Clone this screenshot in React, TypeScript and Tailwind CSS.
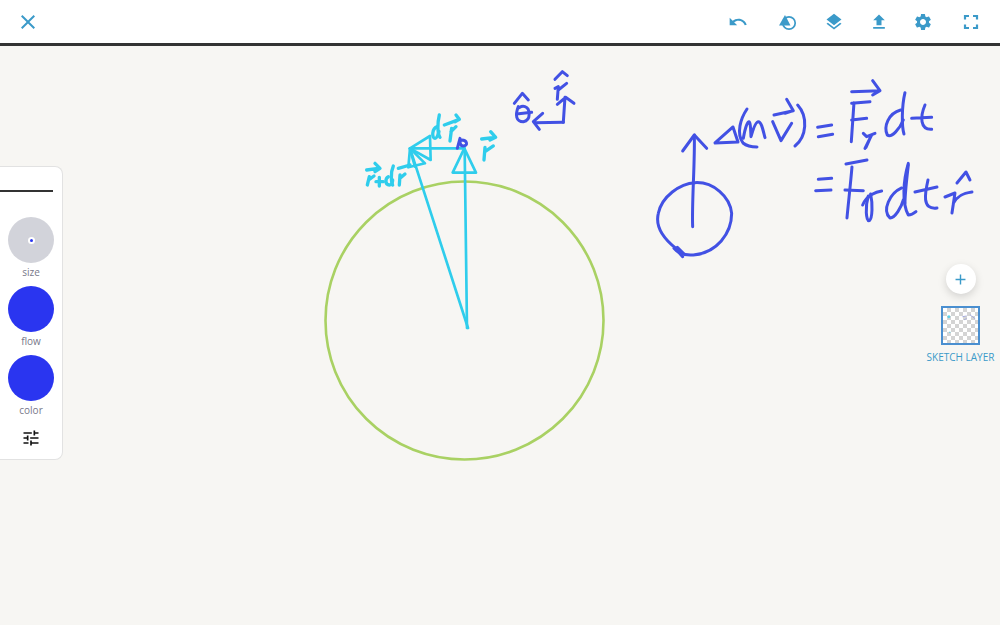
import { MdAdd, MdClose, MdFileUpload, MdLayers, MdSettings, MdTune, MdUndo } from "react-icons/md";

const BLUE_INK = "#4251e4";
const CYAN_INK = "#2fcdec";

// strokes are written in the coordinates of a 3x crop, hence the scale on the groups
const rightInk = [
  "M78 535C40 505 15 470 25 430C35 380 90 340 135 338C190 335 240 380 245 430C245 490 200 550 130 555C105 557 85 550 72 535",
  "M75 535L98 560M82 532L100 550",
  "M128 470C125 400 135 280 133 195",
  "M98 243L133 195L170 235",
  "M249 171L195 219L264 216L249 171",
  "M291 117C272 145 258 190 279 219C290 228 305 231 321 231",
  "M280 205C285 175 292 155 297 155C302 155 302 185 303 200C310 175 318 155 325 155C335 155 340 185 345 203",
  "M368 155L393 212L425 160",
  "M372 135L430 122M410 88L430 122L405 130",
  "M443 105C475 140 470 200 435 228",
  "M503 172L545 165M505 200L548 193",
  "M605 65L690 62M668 32L690 62L668 75",
  "M612 98L604 215M605 100L660 95M605 150L650 145",
  "M640 190L650 200L675 190M665 195C655 215 650 225 645 235M660 205L648 232",
  "M765 68C755 110 755 170 762 192",
  "M752 120C715 130 700 170 712 195C725 205 750 175 760 150",
  "M785 145L845 142M825 105C810 140 810 180 845 178",
  "M505 328L545 325M497 362L543 360",
  "M588 282L651 270M606 291C602 340 595 400 591 444",
  "M585 360L640 362",
  "M638 405C650 375 680 365 695 363",
  "M655 378C645 410 648 455 658 452C668 445 668 400 662 372",
  "M775 280C760 330 755 400 775 435C785 435 792 430 798 425",
  "M775 285C770 330 765 370 765 400",
  "M755 354C720 370 695 420 720 444C735 445 755 410 760 390",
  "M795 366L861 351M834 330C825 370 815 420 861 414",
  "M885 381L915 369L906 429M910 400C920 380 935 370 966 366",
  "M921 339L948 306L960 330",
];

const axesInk = [
  "M615 58L637 35L652 47",
  "M615 85L625 80L622 118M625 90L650 70",
  "M640 187L645 112M622 133L647 112L672 130",
  "M640 187L555 188M578 160L550 185L568 208",
  "M493 130L517 100L535 120",
  "M505 140C495 165 498 185 520 185C545 180 540 145 525 140C510 135 505 150 505 140",
  "M500 162L545 157",
  "M322 265L330 235",
  "M335 240C352 240 355 258 340 258C328 258 328 240 335 240",
];

const vectorLines = [
  "M180 265L354 804",
  "M344 265L351 804",
  "M343 265L308 338L378 338Z",
  "M180 265L343 265",
  "M180 265L240 228L242 300Z",
  "M180 265L225 310L175 322Z",
  "M180 268L195 320",
];

const vectorLetters = [
  "M402 300L405 262M405 275L430 258",
  "M395 237L435 232M422 215L437 232L420 240",
  "M268 165C262 190 262 220 270 232",
  "M262 200C245 205 245 235 255 235C262 235 265 220 267 215",
  "M300 243L305 205M303 215L318 200",
  "M283 195L328 178M318 165L328 178L315 185",
  "M50 330L85 325M75 310L90 325L75 335",
  "M52 375L58 350M58 358L72 348",
  "M78 365L100 365M88 352L88 378",
  "M130 318C120 340 125 370 128 375",
  "M115 350C105 355 105 375 118 375C125 375 128 365 128 360",
  "M148 375L150 345M150 355L165 342",
  "M145 325L180 315",
];

function HistoryShapeIcon() {
  return (
    <svg viewBox="0 0 22 22" className="h-[22px] w-[22px]" fill="none">
      <circle cx="13" cy="12" r="6.2" stroke="currentColor" strokeWidth="1.7" fill="#fff" />
      <path d="M9 4L14.5 14.5H3z" fill="currentColor" />
    </svg>
  );
}

function FullscreenIcon() {
  return (
    <svg viewBox="0 0 20 20" className="h-5 w-5" fill="none" stroke="currentColor" strokeWidth="2.2">
      <path d="M4 7.5V4H8M12 4H16V7.5M16 12.5V16H12M8 16H4V12.5" />
    </svg>
  );
}

function Dial({ label, children }: { label: string; children: React.ReactNode }) {
  return (
    <div className="flex flex-col items-center">
      {children}
      <span className="mt-[2px] text-[10px] leading-[14px] text-[#77788a]">{label}</span>
    </div>
  );
}

export default function App() {
  return (
    <div className="flex h-[625px] w-[1000px] flex-col overflow-hidden bg-[#f7f6f3] font-['Open_Sans',sans-serif]">
      <header className="flex h-[46px] shrink-0 items-center justify-between border-b-[3px] border-[#333333] bg-white pl-4 pr-[19px] text-[#3b9ac9]">
        <MdClose size={24} />
        <div className="flex items-center">
          <MdUndo size={20} />
          <span className="ml-[28px]">
            <HistoryShapeIcon />
          </span>
          <MdLayers size={20} className="ml-[26px]" />
          <MdFileUpload size={20} className="ml-[25px]" />
          <MdSettings size={20} className="ml-[24px]" />
          <span className="ml-[28px]">
            <FullscreenIcon />
          </span>
        </div>
      </header>

      <main className="relative flex-1">
        <svg viewBox="0 46 1000 579" className="absolute inset-0 h-full w-full" fill="none" strokeLinecap="round" strokeLinejoin="round">
          <circle cx="464.5" cy="320.5" r="139" stroke="#a9d163" strokeWidth="2.6" />
          <g transform="translate(350 60) scale(0.3333)" stroke={CYAN_INK}>
            <g strokeWidth="8">
              {vectorLines.map((d) => (
                <path key={d} d={d} />
              ))}
            </g>
            <g strokeWidth="10">
              {vectorLetters.map((d) => (
                <path key={d} d={d} />
              ))}
            </g>
          </g>
          <g transform="translate(350 60) scale(0.3333)" stroke={BLUE_INK} strokeWidth="9">
            {axesInk.map((d) => (
              <path key={d} d={d} />
            ))}
          </g>
          <g transform="translate(650 70) scale(0.3333)" stroke={BLUE_INK} strokeWidth="9">
            {rightInk.map((d) => (
              <path key={d} d={d} />
            ))}
          </g>
        </svg>

        <aside className="absolute left-0 top-[120px] flex h-[294px] w-[63px] flex-col rounded-r-lg border border-l-0 border-[#e2e2e2] bg-white">
          <div className="mt-[23px] h-0.5 w-[53px] bg-[#333333]" />
          <div className="mt-[25px] flex flex-col items-center gap-[7px]">
            <Dial label="size">
              <div className="flex h-[46px] w-[46px] items-center justify-center rounded-full bg-[#d2d3da]">
                <div className="flex h-[7px] w-[7px] items-center justify-center rounded-full bg-white">
                  <div className="h-[3px] w-[3px] rounded-full bg-[#2a35f0]" />
                </div>
              </div>
            </Dial>
            <Dial label="flow">
              <div className="h-[46px] w-[46px] rounded-full bg-[#2a35f0]" />
            </Dial>
            <Dial label="color">
              <div className="h-[46px] w-[46px] rounded-full bg-[#2a35f0]" />
            </Dial>
          </div>
          <MdTune size={20} className="ml-[21px] mt-[11px] text-[#111111]" />
        </aside>

        <div className="absolute right-[6px] top-[218px] flex w-[67px] flex-col items-center text-[#3b9ac9]">
          <button className="flex h-[30px] w-[30px] items-center justify-center rounded-full bg-white shadow-[0_3px_8px_rgba(0,0,0,0.15)]">
            <MdAdd size={17} />
          </button>
          <div className="mt-3 h-[39px] w-[39px] border-2 border-[#4a8fd0] bg-[conic-gradient(#d4d4d4_25%,#ffffff_0_50%,#d4d4d4_0_75%,#ffffff_0)] bg-[length:8px_8px]">
            <svg viewBox="0 0 36 36" fill="none" strokeLinecap="round" className="h-full w-full">
              <circle cx="6" cy="9" r="1.5" fill={CYAN_INK} opacity="0.7" />
              <circle cx="7" cy="25" r="0.8" fill={CYAN_INK} opacity="0.6" />
              <path d="M20 9L24 8M22 12L24 11M28 7L33 11" stroke={BLUE_INK} strokeWidth="0.8" opacity="0.4" />
            </svg>
          </div>
          <span className="mt-[5px] whitespace-nowrap text-[10px] leading-[14px]">SKETCH LAYER</span>
        </div>
      </main>
    </div>
  );
}
